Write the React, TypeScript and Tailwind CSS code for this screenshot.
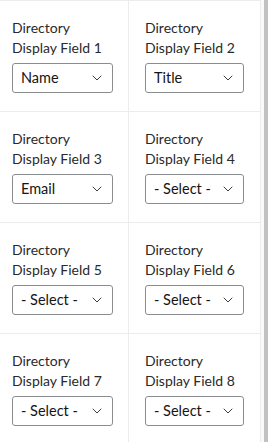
import { ChevronDown } from 'lucide-react';

const fields = [
    { n: 1, value: 'Name' },
    { n: 2, value: 'Title' },
    { n: 3, value: 'Email' },
    { n: 4, value: '- Select -' },
    { n: 5, value: '- Select -' },
    { n: 6, value: '- Select -' },
    { n: 7, value: '- Select -' },
    { n: 8, value: '- Select -' },
];

function FieldCell({ n, value }: { n: number; value: string }) {
    const left = n % 2 === 1;
    return (
        <div
            className={
                left
                    ? "h-[111px] border-b border-r border-[#ececec] pl-3 pt-[17px]"
                    : "h-[111px] border-b border-[#ececec] pl-4 pt-[17px]"
            }
        >
            <div className="text-[14px] leading-[20px] text-[#2a2a2a]">
                Directory
                <br />
                Display Field {n}
            </div>
            <div
                className={
                    (left ? "w-[101px]" : "w-[99px]") +
                    " mt-[5px] flex h-[30px] items-center justify-between rounded-[3px] border border-[#8a8d90] pl-[8px] pr-[7px] text-[14.5px] text-[#151515]"
                }
            >
                <span>{value}</span>
                <ChevronDown size={16} strokeWidth={1.5} className="text-[#3c3f42]" />
            </div>
        </div>
    );
}

export default function App() {
    return (
        <div className="flex h-[442px] w-[268px] overflow-hidden bg-white" style={{ fontFamily: 'Lato, "Open Sans", sans-serif' }}>
            <div className="grid w-[261px] grid-cols-[129px_131px] content-start border-r border-t border-[#ececec]">
                {fields.map(f => (
                    <FieldCell key={f.n} n={f.n} value={f.value} />
                ))}
            </div>
            <div className="flex w-[7px] justify-end bg-[#fafafa]">
                <div className="h-full w-[4px] bg-[#c1c1c1]" />
            </div>
        </div>
    );
}
